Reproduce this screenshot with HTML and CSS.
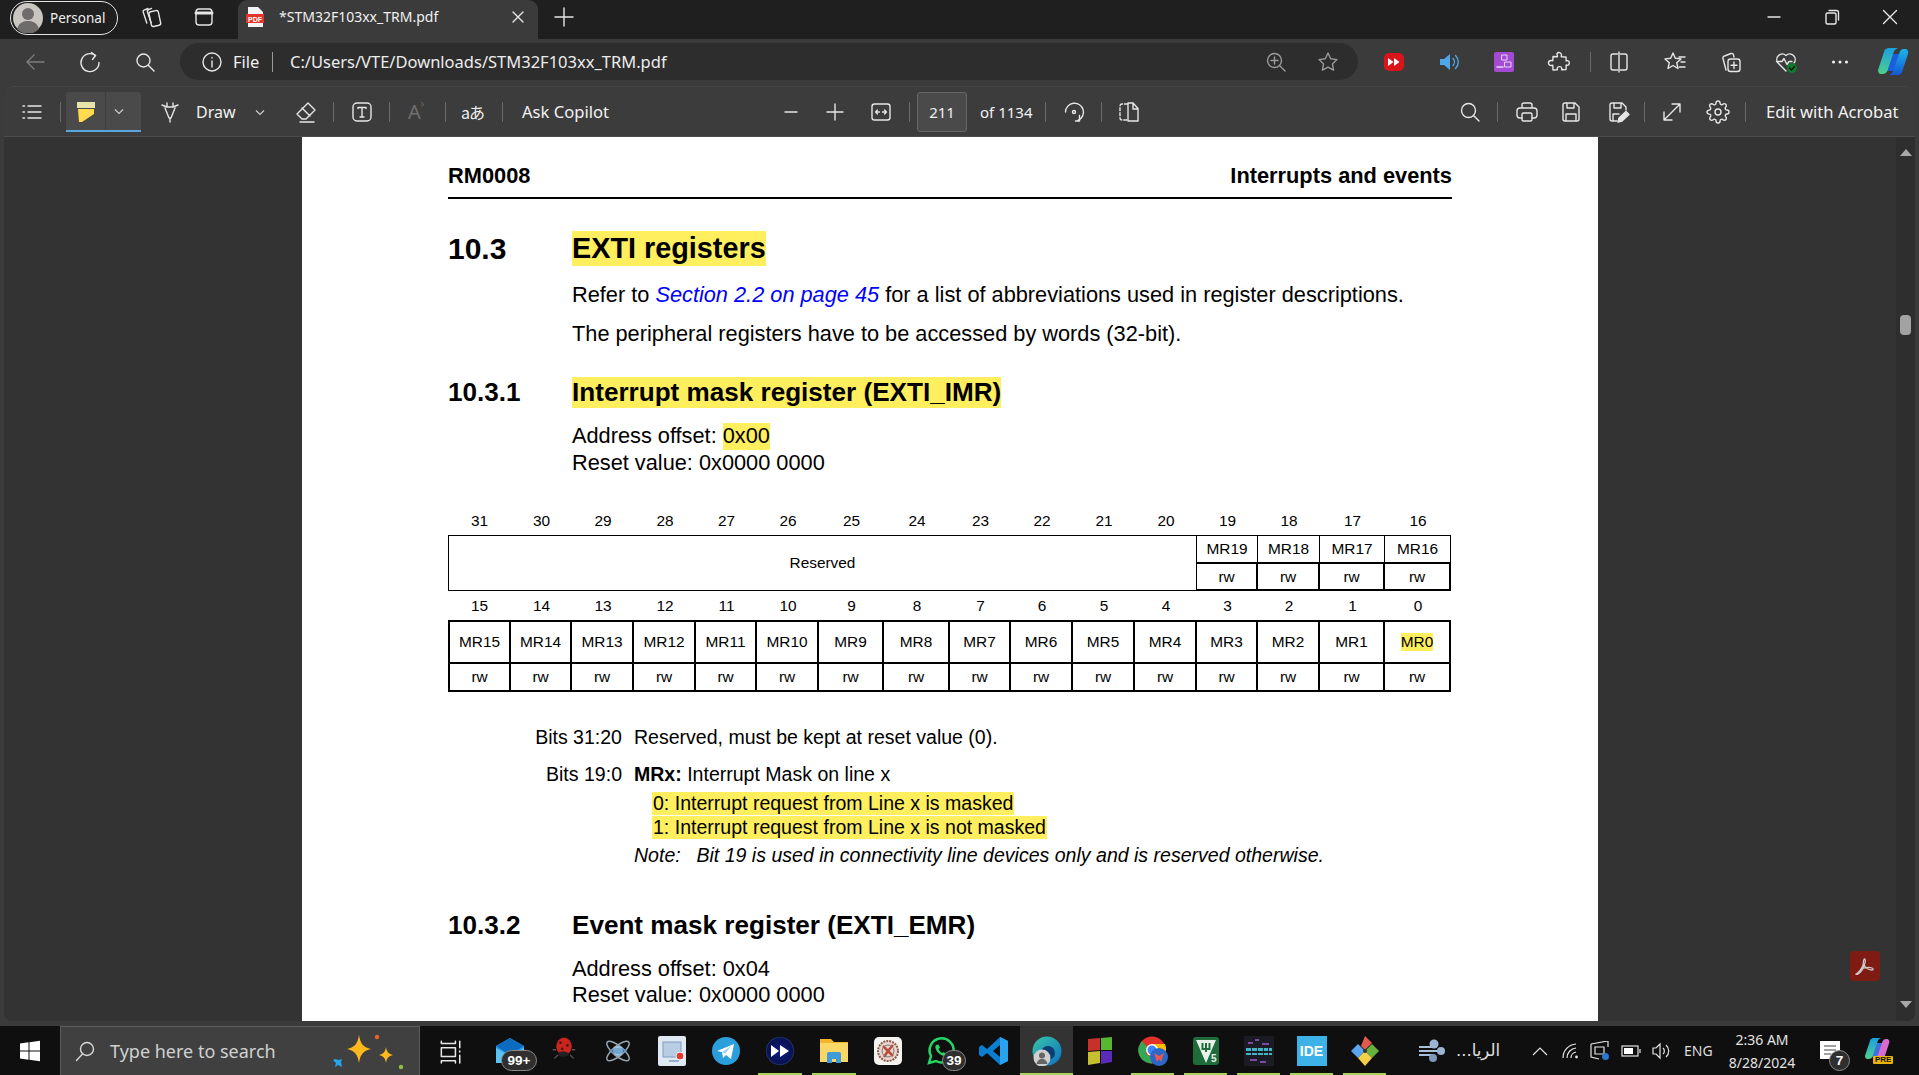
FILE: index.html
```html
<!DOCTYPE html>
<html lang="en">
<head>
<meta charset="utf-8">
<title>STM32F103xx_TRM.pdf</title>
<link rel="stylesheet" href="styles.css">
</head>
<body>
<div class="tabstrip">
  <div class="profile">
    <svg class="avatar" viewBox="0 0 30 30"><circle cx="15" cy="15" r="15" fill="#c9c6c2"/><circle cx="15" cy="11" r="6" fill="#6e6c6a"/><path d="M4 26c2-7 7-8 11-8s9 1 11 8a15 15 0 0 1-22 0z" fill="#6e6c6a"/></svg>
    <span>Personal</span>
  </div>
  <svg class="i ml21" viewBox="0 0 24 24"><path d="M9 3.500l-4 1.600a1.500 1.500 0 0 0-.8 1.900l3.600 11M12.500 3.400l-3.300 1.500a1.500 1.500 0 0 0-.8 1.900l3.700 11"/><rect x="11" y="6" width="9.500" height="15" rx="2" transform="rotate(-12 16 13)"/></svg>
  <svg class="i ml29" viewBox="0 0 24 24"><rect x="4" y="4" width="16" height="16" rx="3"/><path d="M4 8h16" stroke-width="3"/></svg>
  <div class="tab ml22">
    <svg class="pdficon" viewBox="0 0 20 22"><path d="M3 1h10l5 5v15H3z" fill="#f4f4f4"/><rect x="1" y="8" width="18" height="9" fill="#e2352b"/><text x="10" y="15.500" class="pdftxt">PDF</text></svg>
    <span class="tabtitle">*STM32F103xx_TRM.pdf</span>
    <svg class="i" viewBox="0 0 24 24"><path d="M7 7l10 10M17 7L7 17"/></svg>
  </div>
  <svg class="i ml14" viewBox="0 0 24 24"><path d="M12 3v18M3 12h18"/></svg>
  <div class="winctl">
    <span class="wbtn"><svg class="i" viewBox="0 0 24 24"><path d="M6 12h12"/></svg></span>
    <span class="wbtn"><svg class="i" viewBox="0 0 24 24"><rect x="6" y="8" width="10" height="11" rx="1.500"/><path d="M9 5.500h7.500a2 2 0 0 1 2 2V15"/></svg></span>
    <span class="wbtn"><svg class="i" viewBox="0 0 24 24"><path d="M5.500 5.500l13 13M18.500 5.500l-13 13"/></svg></span>
  </div>
</div>

<div class="frame">
  <div class="addr">
    <svg class="i dim ml23" viewBox="0 0 24 24"><path d="M21 12H4M11 5l-7 7 7 7"/></svg>
    <svg class="i ml31" viewBox="0 0 24 24"><path d="M17.500 5.500a9 9 0 1 0 3.500 7"/><path d="M13.500 2.500l4 3-3 4"/></svg>
    <svg class="i ml31" viewBox="0 0 24 24"><circle cx="10.500" cy="10.500" r="6.500"/><path d="M15.500 15.500L21 21"/></svg>
    <div class="pill ml23">
      <svg class="i" viewBox="0 0 24 24"><circle cx="12" cy="12" r="9"/><path d="M12 11v6M12 7.500v.5"/></svg>
      <span class="file ml9">File</span>
      <span class="pillsep"></span>
      <span class="url ml17">C:/Users/VTE/Downloads/STM32F103xx_TRM.pdf</span>
      <svg class="i dim2 auto" viewBox="0 0 24 24"><circle cx="10.500" cy="10.500" r="7"/><path d="M15.500 15.500L21 21M10.500 7v7M7 10.500h7"/></svg>
      <svg class="i dim2 ml28" viewBox="0 0 24 24"><path d="M12 3l2.700 5.800 6.300.8-4.600 4.300 1.200 6.300L12 17.100l-5.600 3.100 1.200-6.300L3 9.600l6.300-.8z"/></svg>
    </div>
    <svg class="i ml24" viewBox="0 0 24 24"><rect x="2" y="3" width="20" height="18" rx="5" fill="#d9141b" stroke="none"/><path d="M6 8l5.500 4L6 16zM12 8l5.500 4-5.500 4z" fill="#fff" stroke="none"/></svg>
    <svg class="i ml31" viewBox="0 0 24 24"><path d="M3 9h4l6-5v16l-6-5H3z" fill="#4ea7e8" stroke="none"/><path d="M16 8.500a5 5 0 0 1 0 7M18.500 5.500a9 9 0 0 1 0 13" stroke="#4ea7e8"/></svg>
    <svg class="i ml31" viewBox="0 0 24 24"><rect x="2" y="2" width="20" height="20" rx="2" fill="#a44bd6" stroke="none"/><path d="M10 5h5v5h-5zM13 12h6v5h-6z" stroke="#e9d4f5" stroke-width="1"/><path d="M5 17h6" stroke="#e9d4f5" stroke-width="1.500"/></svg>
    <svg class="i ml31" viewBox="0 0 24 24"><path d="M10 3.500a2.500 2.500 0 0 1 4.500 1.500c0 .8-.3 1.200-.3 1.800l4.800.2.200 4c.6-.3 1-.5 1.600-.3 2 .6 2 4 0 4.600-.6.200-1 0-1.600-.3l-.2 4.500-4.500.2c.3-.6.500-1 .3-1.600-.6-2-4-2-4.600 0-.2.600 0 1 .3 1.600L6 20l-.2-4.800c-.6 0-1 .3-1.800.3a2.500 2.500 0 0 1 0-5c.8 0 1.200.3 1.800.3L6 6.500l4.500.2c.2-1.200-.9-1.700-.5-3.200z"/></svg>
    <span class="vsep ml19"></span>
    <svg class="i ml16" viewBox="0 0 24 24"><path d="M10.500 4H6a2 2 0 0 0-2 2v12a2 2 0 0 0 2 2h4.500M13.500 4H18a2 2 0 0 1 2 2v12a2 2 0 0 1-2 2h-4.500M12 2v20"/></svg>
    <svg class="i ml32" viewBox="0 0 24 24"><path d="M10 3l2.300 5.300 5.700.6-4.300 3.800 1.300 5.800-5-3-5 3 1.300-5.800L2 8.900l5.700-.6zM16 7h6M18 12h4M16.500 17H22"/></svg>
    <svg class="i ml31" viewBox="0 0 24 24"><path d="M8 20L5 8.500A2 2 0 0 1 6.500 6L13 3.500a2 2 0 0 1 2.500 1.300L16 7"/><rect x="10" y="9" width="12" height="12.500" rx="2.500"/><path d="M16 12v6.500M13 15.200h6"/></svg>
    <svg class="i ml32" viewBox="0 0 24 24"><path d="M12 21L4 13a5.500 5.500 0 0 1 8-7.500A5.500 5.500 0 0 1 20 13M2.500 11.500H8l2-3 3 6 2-3h3"/><circle cx="18" cy="18" r="5" fill="#0f7b2d" stroke="none"/><path d="M15.500 18l2 2 3-3.500" stroke="#111" stroke-width="1.300"/></svg>
    <svg class="i ml30" viewBox="0 0 24 24"><circle cx="5.500" cy="12" r="1.500" fill="#f0f0f0" stroke="none"/><circle cx="12" cy="12" r="1.500" fill="#f0f0f0" stroke="none"/><circle cx="18.500" cy="12" r="1.500" fill="#f0f0f0" stroke="none"/></svg>
    <svg class="copilot ml26" viewBox="0 0 31 27">
      <defs>
        <linearGradient id="cp1" x1="0" y1="0" x2="0" y2="1"><stop offset="0" stop-color="#1b9fe0"/><stop offset="1" stop-color="#4fd08a"/></linearGradient>
        <linearGradient id="cp2" x1="0" y1="0" x2="0" y2="1"><stop offset="0" stop-color="#19b6e8"/><stop offset="1" stop-color="#1557d6"/></linearGradient>
      </defs>
      <path d="M12 6H24L19 23H7z" fill="#1a5fd8"/>
      <path d="M8 1C9 0 10 0 12 0H20C17 1 16 3 15 6L10 21C9 25 7 26 4 26H3C1 26 0 24 0 22L6 4C6.500 2 7 1 8 1z" fill="url(#cp1)"/>
      <path d="M21 27H11C14 26 15 24 16 21L21 6C22 2 24 1 26 1H27C29 1 31 3 30 6L24 24C23 26 22 27 21 27z" fill="url(#cp2)"/>
    </svg>
  </div>

  <div class="card">
    <div class="pdfbar">
      <svg class="i ml16" viewBox="0 0 24 24"><path d="M8 6h13M8 12h13M8 18h13M3 6h1.500M3 12h1.500M3 18h1.500"/></svg>
      <span class="vsep ml16"></span>
      <div class="hlbtn ml5">
        <svg class="i" viewBox="0 0 24 24"><path d="M3 3h18v6H3z" fill="#e8e3a8" stroke="none"/><path d="M4 10h16v5L8 23H5z" fill="#ffdc4d" stroke="none"/></svg>
        <span class="hlsep"></span>
        <svg class="chev" viewBox="0 0 12 12"><path d="M2 4.500l4 4 4-4"/></svg>
      </div>
      <svg class="i ml17" viewBox="0 0 24 24"><path d="M4 5l5 2h6l5-2M7 8l4 10h2l4-10M12 18v4M9 3v3M15 3v3"/></svg>
      <span class="tt draw ml14">Draw</span>
      <svg class="chev ml18" viewBox="0 0 12 12"><path d="M2 4.500l4 4 4-4"/></svg>
      <svg class="i ml28" viewBox="0 0 24 24"><path d="M14 3l7 7-9 9H8l-5-5zM8 8l8 8M6 22h14"/></svg>
      <span class="vsep ml15"></span>
      <svg class="i ml16" viewBox="0 0 24 24"><rect x="3" y="3" width="18" height="18" rx="4"/><path d="M8 8.500V7.500h8v1M12 7.500V17M10 17h4"/></svg>
      <span class="vsep ml15"></span>
      <span class="aread ml15">A<svg class="arcs" viewBox="0 0 10 12"><path d="M1 1a5 5 0 0 1 3 4M1 4a3 3 0 0 1 1.500 2"/></svg></span>
      <span class="vsep ml16"></span>
      <span class="trans ml15">aあ</span>
      <span class="vsep ml17"></span>
      <span class="tt ask ml19">Ask Copilot</span>
      <svg class="i ml167" viewBox="0 0 24 24"><path d="M6 12h12"/></svg>
      <svg class="i ml20" viewBox="0 0 24 24"><path d="M12 4v16M4 12h16"/></svg>
      <svg class="i ml22" viewBox="0 0 24 24"><rect x="3" y="4" width="18" height="16" rx="2.500"/><path d="M6.500 12h4M8.500 10l-2 2 2 2M13.500 12h4M15.500 10l2 2-2 2" stroke-width="1.300"/></svg>
      <span class="vsep ml16"></span>
      <span class="pagebox ml7">211</span>
      <span class="tt ofn ml13">of 1134</span>
      <span class="vsep ml16"></span>
      <svg class="i ml16" viewBox="0 0 24 24"><path d="M3.500 12A9 9 0 1 1 16 20.500"/><path d="M17.500 15.500v5.500h-4" /><circle cx="12" cy="12" r="1.500"/></svg>
      <span class="vsep ml15"></span>
      <svg class="i ml15" viewBox="0 0 24 24"><path d="M10.500 4H5a2 2 0 0 0-2 2v12a2 2 0 0 0 2 2h5.500" stroke-dasharray="3 2"/><path d="M11 3h5l5 5.500V21H11zM16 3v6h5"/></svg>
      <svg class="i ml317" viewBox="0 0 24 24"><circle cx="10.500" cy="10.500" r="7"/><path d="M15.500 15.500L21 21"/></svg>
      <span class="vsep ml15"></span>
      <svg class="i ml17" viewBox="0 0 24 24"><path d="M7 8V5a2 2 0 0 1 2-2h6a2 2 0 0 1 2 2v3M7 18H5a3 3 0 0 1-3-3v-4a3 3 0 0 1 3-3h14a3 3 0 0 1 3 3v4a3 3 0 0 1-3 3h-2"/><rect x="7" y="13" width="10" height="8" rx="1.500"/></svg>
      <svg class="i ml20" viewBox="0 0 24 24"><path d="M4 5a2 2 0 0 1 2-2h10l4 4v12a2 2 0 0 1-2 2H6a2 2 0 0 1-2-2zM8 3v5h7V3M7 21v-7h10v7"/></svg>
      <svg class="i ml23" viewBox="0 0 24 24"><path d="M11 21H6a2 2 0 0 1-2-2V5a2 2 0 0 1 2-2h10l4 4v3M8 3v5h7V3M7 21v-7h6"/><path d="M12 22l1-4 7-6.500 3 3-7 6.500z" fill="#e4e4e4"/></svg>
      <span class="vsep ml14"></span>
      <svg class="i ml15" viewBox="0 0 24 24"><path d="M4 20L20 4M12 4h8v8M4 12v8h8"/></svg>
      <svg class="i ml22" viewBox="0 0 24 24"><circle cx="12" cy="12" r="3"/><path d="M19.400 15a1.650 1.650 0 0 0 .33 1.820l.06.06a2 2 0 0 1 0 2.830 2 2 0 0 1-2.830 0l-.06-.06a1.650 1.650 0 0 0-1.820-.33 1.650 1.650 0 0 0-1 1.510V21a2 2 0 0 1-2 2 2 2 0 0 1-2-2v-.09A1.650 1.650 0 0 0 9 19.400a1.650 1.650 0 0 0-1.820.33l-.06.06a2 2 0 0 1-2.830 0 2 2 0 0 1 0-2.830l.06-.06a1.650 1.650 0 0 0 .33-1.820 1.650 1.650 0 0 0-1.510-1H3a2 2 0 0 1-2-2 2 2 0 0 1 2-2h.09A1.650 1.650 0 0 0 4.600 9a1.650 1.650 0 0 0-.33-1.820l-.06-.06a2 2 0 0 1 0-2.830 2 2 0 0 1 2.830 0l.06.06a1.650 1.650 0 0 0 1.820.33H9a1.650 1.650 0 0 0 1-1.510V3a2 2 0 0 1 2-2 2 2 0 0 1 2 2v.09a1.650 1.650 0 0 0 1 1.510 1.650 1.650 0 0 0 1.820-.33l.06-.06a2 2 0 0 1 2.830 0 2 2 0 0 1 0 2.830l-.06.06a1.650 1.650 0 0 0-.33 1.820V9a1.650 1.650 0 0 0 1.510 1H21a2 2 0 0 1 2 2 2 2 0 0 1-2 2h-.09a1.650 1.650 0 0 0-1.510 1z"/></svg>
      <span class="vsep ml15"></span>
      <span class="tt edit ml20">Edit with Acrobat</span>
    </div>

    <div class="viewer">
      <div class="page">
        <div class="runhead"><span>RM0008</span><span>Interrupts and events</span></div>

        <div class="h1row"><span class="num">10.3</span><span class="mark h1mark">EXTI registers</span></div>
        <p class="body p1">Refer to <a class="xref">Section 2.2 on page 45</a> for a list of abbreviations used in register descriptions.</p>
        <p class="body p2">The peripheral registers have to be accessed by words (32-bit).</p>

        <div class="h2row h2a"><span class="num">10.3.1</span><span class="mark">Interrupt mask register (EXTI_IMR)</span></div>
        <p class="body p3">Address offset: <span class="mark hl">0x00</span></p>
        <p class="body p4">Reset value: 0x0000 0000</p>

        <div class="regnums nums-a">
          <span>31</span><span>30</span><span>29</span><span>28</span><span>27</span><span>26</span><span>25</span><span>24</span><span>23</span><span>22</span><span>21</span><span>20</span><span>19</span><span>18</span><span>17</span><span>16</span>
        </div>
        <div class="reg upper">
          <div class="cell reserved">Reserved</div>
          <div class="cell">MR19</div><div class="cell">MR18</div><div class="cell">MR17</div><div class="cell">MR16</div>
          <div class="cell rw">rw</div><div class="cell rw">rw</div><div class="cell rw">rw</div><div class="cell rw">rw</div>
        </div>
        <div class="regnums nums-b">
          <span>15</span><span>14</span><span>13</span><span>12</span><span>11</span><span>10</span><span>9</span><span>8</span><span>7</span><span>6</span><span>5</span><span>4</span><span>3</span><span>2</span><span>1</span><span>0</span>
        </div>
        <div class="reg lower">
          <div class="cell">MR15</div><div class="cell">MR14</div><div class="cell">MR13</div><div class="cell">MR12</div><div class="cell">MR11</div><div class="cell">MR10</div><div class="cell">MR9</div><div class="cell">MR8</div><div class="cell">MR7</div><div class="cell">MR6</div><div class="cell">MR5</div><div class="cell">MR4</div><div class="cell">MR3</div><div class="cell">MR2</div><div class="cell">MR1</div><div class="cell"><span class="mark mr0">MR0</span></div>
          <div class="cell">rw</div><div class="cell">rw</div><div class="cell">rw</div><div class="cell">rw</div><div class="cell">rw</div><div class="cell">rw</div><div class="cell">rw</div><div class="cell">rw</div><div class="cell">rw</div><div class="cell">rw</div><div class="cell">rw</div><div class="cell">rw</div><div class="cell">rw</div><div class="cell">rw</div><div class="cell">rw</div><div class="cell">rw</div>
        </div>

        <div class="bits b1"><span class="bitlab">Bits 31:20</span><span>Reserved, must be kept at reset value (0).</span></div>
        <div class="bits b2"><span class="bitlab">Bits 19:0</span><span><b>MRx:</b> Interrupt Mask on line x</span></div>
        <div class="vals v0"><span class="mark">0: Interrupt request from Line x is masked</span></div>
        <div class="vals v1"><span class="mark">1: Interrupt request from Line x is not masked</span></div>
        <div class="note"><span class="notelab">Note:</span><span>Bit 19 is used in connectivity line devices only and is reserved otherwise.</span></div>

        <div class="h2row h2b"><span class="num">10.3.2</span><span>Event mask register (EXTI_EMR)</span></div>
        <p class="body p5">Address offset: 0x04</p>
        <p class="body p6">Reset value: 0x0000 0000</p>
      </div>
      <div class="sb">
        <span class="arrow up"></span>
        <span class="thumb"></span>
        <span class="arrow down"></span>
      </div>
      <div class="acro"><svg viewBox="0 0 24 24"><path d="M3 20c2-1 6-5 7-9 .6-2.500.3-6 1.500-6s.8 3 .3 4.500C11 13 8 18 5 20c-1 .7-2.500 .5-2 0zM8 15c4-1.500 8-2 11-1 1.500 .5 1.500 2 0 2-3 0-6-2-8-5" fill="none" stroke="#cfc7c5" stroke-width="1.300"/></svg></div>
    </div>
  </div>
</div>

<div class="taskbar">
  <svg class="win" viewBox="0 0 22 22"><path d="M1 3.500l8.500-1.200V10.500H1zM10.500 2.200L21 .8v9.700H10.500zM1 11.500h8.500v8.200L1 18.500zM10.500 11.500H21v9.700l-10.500-1.400z" fill="#fff"/></svg>
  <div class="search">
    <svg class="i sico" viewBox="0 0 24 24"><circle cx="14" cy="10" r="6.500"/><path d="M9.500 15L3.500 21.500"/></svg>
    <span class="stext">Type here to search</span>
    <svg class="spark" viewBox="0 0 80 40"><path d="M30 2c1.500 9 4 12 12 14-8 2-10.500 5-12 14-1.500-9-4-12-12-14 8-2 10.500-5 12-14z" fill="#fdb91c"/><path d="M57 14c.8 5 2.500 7 7 8-4.500 1-6.200 3-7 8-.8-5-2.500-7-7-8 4.500-1 6.200-3 7-8z" fill="#fdb91c"/><path d="M6 26l4 1 3-1-1 3 1 5-4-2-3 2 1-4-3-3z" fill="#27a5ea"/><circle cx="48" cy="4" r="2.200" fill="#e8622a"/><circle cx="72" cy="34" r="2.200" fill="#8cbf3f"/></svg>
  </div>
  <span class="tb ml3 wide"><svg class="i sm" viewBox="0 0 24 24"><path d="M4 3v2h13V3M4 9h13v8H4zM4 23v-2h13v2M21 3v6M21 12v1M21 16v7"/></svg></span>
  <span class="tb ml6 wide">
    <svg class="app" viewBox="0 0 30 30"><path d="M1 10L15 2l14 8v17H1z" fill="#2a9be4"/><path d="M1 10l14 9 14-9-14-8z" fill="#0e6cc0"/><path d="M1 12l14 8 14-8v15H1z" fill="#5cc4f5"/></svg>
    <span class="badge mailb">99+</span>
  </span>
  <span class="tb wide"><svg class="app bug" viewBox="0 0 30 30"><path d="M8 23l-4 4M22 23l4 4M6 17H2M24 17h4" stroke="#555" stroke-width="1.500"/><ellipse cx="15" cy="13" rx="9" ry="10" fill="#c8251f"/><circle cx="11" cy="9" r="1.500" fill="#4a0f0c"/><circle cx="19" cy="12" r="1.500" fill="#4a0f0c"/><circle cx="13" cy="16" r="1.500" fill="#4a0f0c"/><ellipse cx="14" cy="22" rx="6" ry="3" fill="#222"/></svg></span>
  <span class="tb wide"><svg class="app" viewBox="0 0 30 30" fill="none"><g stroke="#9aa4ad" stroke-width="1.500"><ellipse cx="15" cy="15" rx="14" ry="5" transform="rotate(40 15 15)"/><ellipse cx="15" cy="15" rx="14" ry="5" transform="rotate(-40 15 15)"/></g><circle cx="15" cy="15" r="5" fill="#9cc6e6"/><ellipse cx="15" cy="15" rx="9" ry="3" fill="#5a8fc0" opacity=".6"/></svg></span>
  <span class="tb wide"><svg class="app" viewBox="0 0 30 30"><rect x="1" y="0" width="28" height="30" rx="2" fill="#dfe9f4"/><rect x="6" y="6" width="18" height="15" fill="#b9cde2" stroke="#7e9cbf"/><path d="M12 25h10" stroke="#7e9cbf" stroke-width="1.500"/><circle cx="23" cy="20" r="4" fill="#e23a33" stroke="#fff"/></svg></span>
  <span class="tb wide"><svg class="app" viewBox="0 0 30 30"><circle cx="15" cy="15" r="14" fill="#2b9fdc"/><path d="M6 15l17-7-3 15-5-4-3 3-1-6z" fill="#fff"/><path d="M11 16l9-6-6 8z" fill="#a6d3ef"/></svg></span>
  <span class="tb wide run"><svg class="app" viewBox="0 0 30 30"><defs><radialGradient id="ff" cx=".5" cy=".5" r=".6"><stop offset="0" stop-color="#0d1a88"/><stop offset=".75" stop-color="#0a1250"/><stop offset="1" stop-color="#4c8fe8"/></radialGradient></defs><circle cx="15" cy="15" r="14" fill="url(#ff)"/><path d="M6 9l8 6-8 6zM15 9l9 6-9 6z" fill="#fff"/></svg></span>
  <span class="tb wide run"><svg class="app" viewBox="0 0 30 30"><path d="M1 3h11l3 3h14v20H1z" fill="#f3b62a"/><rect x="1" y="7" width="28" height="19" fill="#fbd768"/><path d="M8 27v-9a2 2 0 0 1 2-2h10a2 2 0 0 1 2 2v9h-5v-4h-4v4z" fill="#3f9bd9"/></svg></span>
  <span class="tb"><svg class="app" viewBox="0 0 30 30"><rect x="1" y="1" width="28" height="28" rx="5" fill="#f5f3f0"/><circle cx="15" cy="15" r="10" fill="#e8d6cf" stroke="#8d5a4e" stroke-width="2" stroke-dasharray="2 1"/><path d="M10 10l10 10M20 9l-5 6-4 6" stroke="#c04a3a" stroke-width="2.500"/><circle cx="15" cy="15" r="6" fill="none" stroke="#7a7a7a"/></svg></span>
  <span class="tb">
    <svg class="app" viewBox="0 0 30 30"><path d="M3 27l2-7a12 12 0 1 1 5 5z" fill="none" stroke="#25d366" stroke-width="2.500"/><path d="M10 9c-1.500 2 0 6 3 8.500s6 3 7.500 1.500l-2.500-3-2 1c-1.500-1-3-2.500-3.500-4l1.500-1.500-1.500-3z" fill="#25d366"/></svg>
    <span class="badge wab">39</span>
  </span>
  <span class="tb"><svg class="app" viewBox="0 0 30 30"><path d="M21 1l8 4v20l-8 4-13-12-5 4-3-2V11l3-2 5 4zM21 9l-7 6 7 6z" fill="#0a7fd0"/><path d="M21 1l8 4v20l-8 4z" fill="#2aa3ef"/></svg></span>
  <span class="tb cur run">
    <svg class="app" viewBox="0 0 30 30"><defs><linearGradient id="eg" x1="0" y1="0" x2="1" y2="1"><stop offset="0" stop-color="#37c6a6"/><stop offset="1" stop-color="#0f6fc4"/></linearGradient></defs><circle cx="15" cy="15" r="14.500" fill="url(#eg)"/><circle cx="16" cy="17" r="7" fill="#0c3d73"/><circle cx="10" cy="22" r="8.500" fill="#cfcfcf"/><circle cx="10" cy="19.500" r="3" fill="#666"/><path d="M4.500 28c1-4 3-5 5.500-5s4.500 1 5.500 5z" fill="#666"/></svg>
  </span>
  <span class="tb"><svg class="app" viewBox="0 0 30 30"><path d="M3 3l12-1v12L3 15z" fill="#c8302a"/><path d="M16 2l11-1v13l-11 0z" fill="#59b631"/><path d="M3 16l12-1v12L3 29z" fill="#c7bf2d"/><path d="M16 15h11v11l-11 2z" fill="#5a2bb8"/></svg></span>
  <span class="tb run">
    <svg class="app" viewBox="0 0 30 30"><circle cx="14" cy="14" r="13.500" fill="#e3322a"/><path d="M14 27.500a13.500 13.500 0 0 1-13-18l8 9a6 6 0 0 0 5 2z" fill="#34a853"/><path d="M1 14a13.500 13.500 0 0 1 3-9l6 7-3 6z" fill="#34a853"/><path d="M14 8h13a13.500 13.500 0 0 1-6 17l-3-7z" fill="#fbbc05"/><circle cx="14" cy="14" r="6" fill="#fff"/><circle cx="14" cy="14" r="4.500" fill="#4285f4"/><circle cx="21" cy="21" r="9" fill="#2a67c9"/><path d="M16 17l5 3 5-3-3 9-2-3-2 3z" fill="#e85a4f"/></svg>
  </span>
  <span class="tb run"><svg class="app" viewBox="0 0 30 30"><rect x="2" y="1" width="26" height="28" rx="3" fill="#1f6b3a"/><path d="M5 4h20L15 27z" fill="#e8f2ea"/><path d="M11.500 7v6h7V7M15 7v9" stroke="#1f6b3a" stroke-width="2" fill="none"/><text x="20" y="26" class="v5">5</text></svg></span>
  <span class="tb run"><svg class="app" viewBox="0 0 30 30"><rect x="0" y="0" width="30" height="30" fill="#1b1b24"/><g fill="#3fb7c9"><rect x="2" y="12" width="26" height="3"/><rect x="2" y="17" width="26" height="2"/></g><g fill="#7b4aa8"><rect x="4" y="6" width="5" height="2"/><rect x="11" y="3" width="4" height="2"/><rect x="18" y="7" width="7" height="2"/><rect x="6" y="23" width="7" height="2"/><rect x="16" y="25" width="6" height="2"/></g><g fill="#1b1b24"><rect x="7" y="10" width="1" height="12"/><rect x="13" y="10" width="1" height="12"/><rect x="19" y="10" width="1" height="12"/><rect x="24" y="10" width="1" height="12"/></g></svg></span>
  <span class="tb run"><span class="ide">IDE</span></span>
  <span class="tb run"><svg class="app" viewBox="0 0 30 30"><path d="M15 0l7 7-7 7-4-4z" fill="#e25a4e"/><path d="M1 15l7-7 7 7-7 7z" fill="#5aa7f0"/><path d="M15 15l7-7 7 7-7 7z" fill="#67b23f"/><path d="M8 22l7-7 7 7-7 8z" fill="#f4cf4a"/><circle cx="15" cy="15" r="2" fill="#333"/></svg></span>

  <svg class="wind ml27" viewBox="0 0 28 24"><path d="M1 8h15M1 12h22M1 16h15" stroke="#a9bfd9" stroke-width="2.200" fill="none"/><circle cx="16" cy="5" r="4.500" fill="#9cb4d2"/><circle cx="23" cy="12" r="4" fill="#9cb4d2"/><circle cx="15" cy="19" r="4" fill="#7f98b8"/></svg>
  <span class="weather ml12" dir="rtl">الريا...</span>
  <svg class="t ml30" viewBox="0 0 20 20"><path d="M3 14l7-7 7 7"/></svg>
  <svg class="t ml11" viewBox="0 0 20 20"><path d="M2 17A14 14 0 0 1 15 3M6 17A10 10 0 0 1 15 7M10 17A6 6 0 0 1 15 11"/><circle cx="15.500" cy="16" r="1.400" fill="#e4e4e4" stroke="none"/></svg>
  <svg class="t ml9" viewBox="0 0 20 20"><path d="M1 3l17-3v6M1 3v13l8 2M5 6h9v7H5z"/><circle cx="15.500" cy="15.500" r="3.500" fill="#2b78d0" stroke="none"/></svg>
  <svg class="t ml11" viewBox="0 0 20 20"><rect x="1" y="5" width="16" height="10"/><rect x="3" y="7" width="9" height="6" fill="#fff" stroke="none"/><path d="M19 8v4"/></svg>
  <svg class="t ml10" viewBox="0 0 20 20"><path d="M2 7h3l4-4v14l-4-4H2zM12 7a4 4 0 0 1 0 6M15 4a8 8 0 0 1 0 12"/></svg>
  <span class="eng ml13">ENG</span>
  <div class="clock ml8"><span>2:36 AM</span><span>8/28/2024</span></div>
  <span class="notif ml15">
    <svg class="note-ic" viewBox="0 0 20 18"><path d="M0 0h20v18H0z" fill="#fff"/><path d="M4 5h12M4 9h12M4 13h7" stroke="#444" stroke-width="1.200"/></svg>
    <span class="badge nb">7</span>
  </span>
  <span class="cpre ml20">
    <svg class="cpre-ic" viewBox="0 0 31 27">
      <path d="M12 6H24L19 23H7z" fill="#3c6fe0"/>
      <path d="M8 1C9 0 10 0 12 0H20C17 1 16 3 15 6L10 21C9 25 7 26 4 26H3C1 26 0 24 0 22L6 4C6.500 2 7 1 8 1z" fill="url(#cp1)"/>
      <path d="M21 27H11C14 26 15 24 16 21L21 6C22 2 24 1 26 1H27C29 1 31 3 30 6L24 24C23 26 22 27 21 27z" fill="#d86bd0"/>
    </svg>
    <span class="prelab">PRE</span>
  </span>
</div>
</body>
</html>
```
FILE: styles.css
```css
* { box-sizing: border-box; }
html, body { margin: 0; padding: 0; width: 100%; height: 100%; overflow: hidden; background: #0f0f0f; }
body { display: flex; flex-direction: column; height: 1075px; font-family: "Noto Sans", "Open Sans", "DejaVu Sans", sans-serif; color: #f0f0f0; }
p { margin: 0; }

.ml3 { margin-left: 3px; } .ml5 { margin-left: 5px; } .ml6 { margin-left: 6px; } .ml7 { margin-left: 7px; }
.ml8 { margin-left: 8px; } .ml9 { margin-left: 9px; } .ml10 { margin-left: 10px; } .ml11 { margin-left: 11px; }
.ml12 { margin-left: 12px; } .ml13 { margin-left: 13px; } .ml14 { margin-left: 14px; } .ml15 { margin-left: 15px; }
.ml16 { margin-left: 16px; } .ml17 { margin-left: 17px; } .ml18 { margin-left: 18px; } .ml19 { margin-left: 19px; }
.ml20 { margin-left: 20px; } .ml21 { margin-left: 21px; } .ml22 { margin-left: 22px; } .ml23 { margin-left: 23px; }
.ml24 { margin-left: 24px; } .ml26 { margin-left: 26px; } .ml27 { margin-left: 27px; } .ml28 { margin-left: 28px; }
.ml29 { margin-left: 29px; } .ml30 { margin-left: 30px; } .ml31 { margin-left: 31px; } .ml32 { margin-left: 32px; }
.ml167 { margin-left: 167px; } .ml317 { margin-left: 317px; }
.auto { margin-left: auto; }

.i { width: 24px; height: 24px; flex: none; fill: none; stroke: #e6e6e6; stroke-width: 1.4; stroke-linecap: round; stroke-linejoin: round; }
.i.dim { stroke: #7c7c7c; }
.i.dim2 { stroke: #9a9a9a; }
.i.sm { width: 26px; height: 26px; }
.vsep { width: 1px; height: 20px; background: #6a6a6a; flex: none; }

/* tab strip */
.tabstrip { height: 39px; flex: none; background: #1f1f1f; display: flex; align-items: center; padding-left: 10px; }
.profile { width: 108px; height: 34px; margin-bottom: 4px; border: 1.5px solid #e4e4e4; border-radius: 17px; display: flex; align-items: center; padding-left: 2px; font-size: 13.5px; }
.avatar { width: 30px; height: 30px; flex: none; }
.profile span { margin-left: 7px; }
.tabstrip > .i { margin-bottom: 5px; }
.tab { width: 300px; height: 39px; background: #3b3b3b; border-radius: 9px 9px 0 0; display: flex; align-items: center; padding: 0 8px 5px 7px; font-size: 14px; }
.pdficon { width: 20px; height: 22px; flex: none; }
.pdftxt { font: bold 7px "Liberation Sans", sans-serif; fill: #fff; text-anchor: middle; }
.tabtitle { margin-left: 14px; flex: 1; white-space: nowrap; margin-bottom: 1px; }
.winctl { margin-left: auto; display: flex; margin-bottom: 5px; }
.wbtn { width: 58px; display: flex; justify-content: center; }

/* frame */
.frame { height: 987px; flex: none; background: #3b3b3b; display: flex; flex-direction: column; }
.addr { height: 47px; flex: none; display: flex; align-items: center; padding-bottom: 2px; }
.pill { width: 1178px; height: 37px; border-radius: 18.500px; background: #2d2d2d; display: flex; align-items: center; padding: 0 18px 0 20px; font-size: 16.500px; }
.file { width: 39px; }
.pillsep { width: 1px; height: 20px; background: #9a9a9a; flex: none; }
.url { white-space: nowrap; font-size: 16.500px; color: #ececec; }
.copilot { width: 31px; height: 27px; flex: none; }

.card { flex: 1; margin: 0 4px 5px; min-height: 0; display: flex; flex-direction: column; border-radius: 8px; overflow: hidden; background: #333; position: relative; }
.pdfbar { height: 51px; flex: none; background: #3c3c3c; border-top: 1px solid #444; border-bottom: 1px solid #4c4c4c; border-radius: 8px 8px 0 0; display: flex; align-items: center; font-size: 16.600px; white-space: nowrap; }
.hlbtn { width: 75px; height: 40px; background: #4a4a4a; border-bottom: 2px solid #5aa6dc; border-radius: 3px 3px 0 0; display: flex; align-items: center; padding-left: 8px; flex: none; }
.hlsep { width: 1px; height: 38px; background: #3f3f3f; margin-left: 7px; flex: none; }
.chev { width: 12px; height: 12px; flex: none; fill: none; stroke: #d0d0d0; stroke-width: 1.100; }
.hlbtn .chev { margin-left: 7px; }
.tt { flex: none; color: #f2f2f2; }
.draw { width: 40px; font-size: 16px; }
.ask { width: 90px; }
.ofn { width: 49px; font-size: 15px; }
.edit { width: 133px; }
.aread { width: 24px; flex: none; color: #6f6f6f; font-size: 20px; position: relative; padding-left: 3px; }
.arcs { position: absolute; right: 0; top: 3px; width: 9px; height: 11px; fill: none; stroke: #6f6f6f; stroke-width: 1; }
.trans { width: 24px; flex: none; font-size: 16px; font-family: "Noto Sans CJK JP", "Noto Sans", sans-serif; letter-spacing: -1px; }
.pagebox { width: 50px; height: 40px; flex: none; background: #4a4a4a; border: 1px solid #666; border-radius: 3px; display: flex; align-items: center; justify-content: center; font-size: 15px; }

/* viewer */
.viewer { flex: 1; min-height: 0; display: flex; position: relative; }
.page { width: 1296px; margin-left: 298px; flex: none; background: #fff; color: #000; padding: 27px 146px 0 146px; font-family: "Liberation Sans", Arial, sans-serif; overflow: hidden; }
.runhead { display: flex; justify-content: space-between; font-weight: bold; font-size: 21.800px; line-height: 24px; height: 35px; padding-bottom: 9px; border-bottom: 2px solid #000; }
.num { width: 124px; flex: none; }
.mark { background: #ffef5f; }
.h1row { display: flex; margin-top: 32px; font-weight: bold; font-size: 28.800px; line-height: 35px; height: 35px; }
.h1row .num { font-size: 30px; }
.h2row { display: flex; font-weight: bold; font-size: 26.100px; line-height: 31px; height: 31px; }
.h2a { margin-top: 31px; }
.h2b { margin-top: 44px; }
.body { margin-left: 124px; font-size: 21.750px; line-height: 24px; }
.p1 { margin-top: 17px; }
.p2 { margin-top: 15px; }
.p3 { margin-top: 16px; }
.p4 { margin-top: 3px; }
.p5 { margin-top: 16px; }
.p6 { margin-top: 2px; }
.xref { color: #0000ff; font-style: italic; }
.hl { padding-bottom: 2px; }

.regnums, .reg { display: grid; grid-template-columns: 63px 61px 62px 62px 61px 62px 65px 66px 61px 62px 62px 62px 61px 62px 65px 66px; width: 1003px; font-size: 15.400px; }
.regnums span { text-align: center; line-height: 24px; }
.nums-a { margin-top: 34px; height: 26px; }
.nums-b { height: 29px; padding-top: 3px; }
.upper { grid-template-columns: 62px 61px 62px 62px 61px 62px 65px 66px 61px 62px 62px 62px 61px 62px 65px 66px; grid-template-rows: 27px 28px; border-top: 1px solid #000; border-left: 1px solid #000; }
.upper .cell { border-right: 1px solid #000; border-bottom: 1px solid #000; }
.upper .reserved { grid-column: 1 / span 12; grid-row: 1 / span 2; }
.upper .rw { border-top: 1px solid #000; border-right-width: 2px; border-bottom-width: 2px; box-shadow: -1px 0 0 #000; }
.lower { grid-template-columns: 61px 61px 62px 62px 61px 62px 65px 66px 61px 62px 62px 62px 61px 62px 65px 66px; grid-template-rows: 42px 28px; border-top: 2px solid #000; border-left: 2px solid #000; }
.lower .cell { border-right: 2px solid #000; border-bottom: 2px solid #000; }
.cell { display: flex; align-items: center; justify-content: center; }
.mr0 { padding: 0; line-height: 18px; }

.bits { display: flex; font-size: 19.550px; line-height: 22px; }
.b1 { margin-top: 34px; }
.b2 { margin-top: 15px; }
.bitlab { width: 174px; text-align: right; margin-right: 12px; flex: none; }
.vals { margin-left: 204px; font-size: 19.550px; line-height: 23px; }
.vals .mark { display: inline-block; padding-right: 1px; padding-left: 1px; }
.v0 { margin-top: 7px; height: 23px; }
.v1 { margin-top: 1px; height: 23px; }
.note { display: flex; margin: 5px 0 0 186px; font-size: 19.550px; font-style: italic; line-height: 22px; }
.notelab { width: 62.500px; flex: none; }

.sb { width: 19px; margin-left: auto; background: #2e2e2e; display: flex; flex-direction: column; align-items: center; padding: 12px 0 13px; }
.arrow { width: 0; height: 0; border-left: 6.500px solid transparent; border-right: 6.500px solid transparent; }
.arrow.up { border-bottom: 7px solid #a8a8a8; }
.arrow.down { border-top: 7px solid #a8a8a8; margin-top: auto; }
.thumb { width: 11px; height: 20px; background: #a2a2a2; border-radius: 4px; margin-top: 159px; }
.acro { position: absolute; left: 1846px; top: 814px; width: 30px; height: 30px; background: #7e1c14; border-radius: 4px; display: flex; align-items: center; justify-content: center; }
.acro svg { width: 24px; height: 24px; }

/* taskbar */
.taskbar { height: 49px; flex: none; background: #0f0f0f; display: flex; align-items: center; padding-left: 15px; white-space: nowrap; }
.win { width: 30px; height: 22px; flex: none; }
.search { width: 360px; height: 49px; margin-left: 15px; flex: none; background: #404040; border: 1px solid #5c5c5c; border-bottom: none; display: flex; align-items: center; padding-left: 12px; position: relative; }
.sico { stroke: #d8d8d8; }
.stext { margin-left: 13px; font-size: 18px; color: #d0d0d0; }
.spark { position: absolute; right: 10px; top: 6px; width: 80px; height: 40px; }
.tb { width: 53px; height: 49px; flex: none; display: flex; align-items: center; justify-content: center; position: relative; }
.tb.wide { width: 54px; }
.tb.cur { background: #333; }
.tb.run::after { content: ""; position: absolute; left: 5px; right: 5px; bottom: 0; height: 2px; background: #a5d35c; }
.tb.cur::after { left: 0; right: 0; }
.app { width: 30px; height: 30px; flex: none; }
.app.bug { width: 26px; height: 26px; margin-bottom: 5px; }
.badge { position: absolute; background: #2f2f2f; border: 1px solid #8a8a8a; border-radius: 11px; height: 21px; min-width: 21px; display: flex; align-items: center; justify-content: center; font-size: 13.500px; font-weight: bold; color: #fff; padding: 0 3px; font-family: "Liberation Sans", sans-serif; }
.mailb { left: 18px; top: 24px; width: 36px; }
.wab { left: 28px; top: 24px; width: 24px; }
.nb { left: 12px; top: 15px; width: 21px; }
.ide { width: 30px; height: 30px; background: #3cb2e8; color: #fff; font: bold 14px "Liberation Sans", sans-serif; display: flex; align-items: center; justify-content: center; }
.v5 { font: bold 10px "Liberation Sans", sans-serif; fill: #e8f2ea; }
.wind { width: 28px; height: 24px; flex: none; }
.weather { width: 42px; flex: none; font-size: 16.500px; color: #e0e0e0; font-family: "DejaVu Sans", sans-serif; text-align: right; }
.t { width: 20px; height: 20px; flex: none; fill: none; stroke: #e4e4e4; stroke-width: 1.200; }
.eng { width: 30px; flex: none; font-size: 14px; color: #dcdcdc; }
.clock { width: 80px; flex: none; display: flex; flex-direction: column; align-items: center; font-size: 14px; line-height: 23px; color: #e2e2e2; }
.notif, .cpre { width: 28px; height: 32px; flex: none; position: relative; display: block; }
.note-ic { width: 20px; height: 18px; display: block; margin: 6px 0 0 3px; }
.cpre-ic { width: 25px; height: 22px; display: block; margin-top: 3px; }
.prelab { position: absolute; left: 8px; top: 21px; background: #eab308; color: #111; font: bold 8px/8px "Liberation Sans", sans-serif; padding: 0 2px; border-radius: 1px; }
```
